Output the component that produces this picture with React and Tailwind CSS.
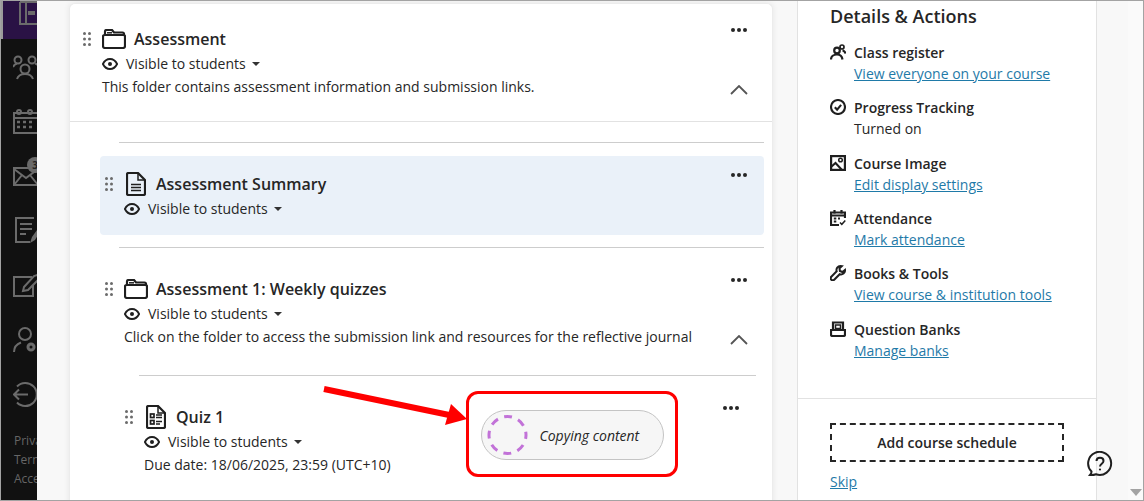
import React from "react";

const ink = "#1f1f1f";

function Grip() {
  return (
    <svg width="8" height="14" viewBox="0 0 8 14" fill="#6b6b6b" className="shrink-0">
      {[1.5, 7, 12.5].map((y) => (
        <g key={y}>
          <circle cx="1.5" cy={y} r="1.5" />
          <circle cx="6.5" cy={y} r="1.5" />
        </g>
      ))}
    </svg>
  );
}

function Folder() {
  return (
    <svg width="24" height="20" viewBox="0 0 24 20" fill="none" stroke={ink} strokeWidth="2.2" className="shrink-0">
      <path d="M3 6V2.500C3 1.700 3.600 1 4.500 1H10l2 2.500h8.500c.8 0 1.500.7 1.500 1.500v1" />
      <path d="M1 7.500C1 6.700 1.700 6 2.500 6h19c.8 0 1.500.7 1.500 1.500V17c0 1.100-.9 2-2 2H3c-1.100 0-2-.9-2-2z" />
      <path d="M5 3.800h5" strokeWidth="1.500" />
    </svg>
  );
}

function Doc({ quiz }) {
  return (
    <svg width="20" height="24" viewBox="0 0 20 24" fill="none" stroke={ink} strokeWidth="2.2" className="shrink-0">
      <path d="M2.500 1H12l7 7v13.500c0 .8-.7 1.500-1.500 1.500h-15C1.700 23 1 22.300 1 21.500v-19C1 1.700 1.700 1 2.500 1z" />
      <path d="M12 1v7h7" strokeWidth="1.500" />
      {quiz ? (
        <>
          <rect x="4.500" y="9" width="3.500" height="3.500" strokeWidth="1.700" />
          <rect x="4.500" y="15.500" width="3.500" height="3.500" strokeWidth="1.700" />
          <path d="M10 10h6M10 12.500h6M10 16.500h6M10 19h4" strokeWidth="1.500" />
        </>
      ) : (
        <path d="M5 12.500h10M5 15.500h10M5 18.500h10" strokeWidth="1.700" />
      )}
    </svg>
  );
}

function Eye() {
  return (
    <svg width="16" height="12" viewBox="0 0 16 12" fill="none" stroke={ink} strokeWidth="1.900" className="shrink-0">
      <path d="M.9 6C2.500 2.800 5 1 8 1s5.500 1.800 7.100 5C13.500 9.200 11 11 8 11S2.500 9.200.9 6z" />
      <circle cx="8" cy="6" r="2" fill={ink} stroke="none" />
    </svg>
  );
}

function Visible() {
  return (
    <div className="flex items-center h-[23px] text-[14px] text-[#262626]">
      <Eye />
      <span className="ml-2">Visible to students</span>
      <span className="ml-[6px] mt-[1px] w-0 h-0 border-x-[4px] border-x-transparent border-t-[4px] border-t-[#333333]" />
    </div>
  );
}

function Dots({ className }) {
  return (
    <div className={`flex gap-[2px] ${className}`}>
      <span className="w-[4px] h-[4px] rounded-full bg-[#262626]" />
      <span className="w-[4px] h-[4px] rounded-full bg-[#262626]" />
      <span className="w-[4px] h-[4px] rounded-full bg-[#262626]" />
    </div>
  );
}

function Chevron() {
  return (
    <svg width="18" height="10" viewBox="0 0 18 10" fill="none" stroke="#555555" strokeWidth="1.800">
      <path d="M1 9l8-8 8 8" />
    </svg>
  );
}

function Sidebar() {
  const c = "#6b6b6b";
  return (
    <aside className="relative w-[36px] shrink-0 bg-[#111111] overflow-hidden flex flex-col">
      <div className="h-[38px] bg-[#2a1245] shrink-0 flex">
        <div className="w-[2px] bg-[#9a9a9a]" />
        <svg width="34" height="38" viewBox="0 0 34 38" fill="none" stroke={c} strokeWidth="2" className="shrink-0">
          <path d="M17 1V23H40M17 1h20M23 1v22" />
          <rect x="25" y="10" width="7" height="4" fill={c} stroke="none" />
        </svg>
      </div>
      <div className="flex flex-col pl-[12px]">
        <svg width="30" height="30" viewBox="0 0 30 30" fill="none" stroke={c} strokeWidth="2" className="mt-[16px] shrink-0">
          <circle cx="5" cy="5" r="3.500" />
          <circle cx="19" cy="5" r="3.500" />
          <circle cx="12" cy="14" r="4.500" />
          <path d="M0 12c1-2 2-3 4-3.500M26 12c-1-2-2-3-4-3.500M4 24c1-3 4-5 8-5s7 2 8 5" />
        </svg>
        <svg width="30" height="30" viewBox="0 0 30 30" fill="none" stroke={c} strokeWidth="2" className="mt-[24px] shrink-0">
          <rect x="1" y="4" width="24" height="20" />
          <path d="M1 9h24" />
          <circle cx="6" cy="3" r="2" />
          <circle cx="17" cy="3" r="2" />
          <path d="M4 13h3M10 13h3M16 13h3M4 18h3M10 18h3M16 18h3" strokeWidth="2.500" />
        </svg>
        <div className="relative mt-[20px] h-[30px]">
          <svg width="30" height="30" viewBox="0 0 30 30" fill="none" stroke={c} strokeWidth="2">
            <rect x="1" y="9" width="24" height="17" />
            <path d="M1 10l12 9 12-9M1 26l8-10M25 26l-8-10" />
          </svg>
          <span className="absolute left-[14px] top-[-2px] w-[16px] h-[16px] rounded-full bg-[#6a6a6a] text-[10px] leading-[16px] text-[#222222] font-bold text-center">3</span>
        </div>
        <svg width="30" height="30" viewBox="0 0 30 30" fill="none" stroke={c} strokeWidth="2" className="mt-[28px] shrink-0">
          <path d="M21 1H3v24h14" />
          <path d="M7 7h12M7 12h12M7 17h6" />
          <path d="M17 26l2-6 5-7 3 2-5 8z" fill={c} stroke="none" />
        </svg>
        <svg width="30" height="30" viewBox="0 0 30 30" fill="none" stroke={c} strokeWidth="2" className="mt-[25px] shrink-0">
          <path d="M19 5H1v19h19V13" />
          <path d="M11 15l10-11 3-1 2 2-1 3-10 10-5 1z" />
        </svg>
        <svg width="30" height="30" viewBox="0 0 30 30" fill="none" stroke={c} strokeWidth="2" className="mt-[25px] shrink-0">
          <circle cx="12" cy="7" r="6" />
          <path d="M1 25c0-5 3-8 7-9.500" />
          <circle cx="18" cy="20" r="3" strokeWidth="3" />
        </svg>
        <svg width="30" height="30" viewBox="0 0 30 30" fill="none" stroke={c} strokeWidth="2" className="mt-[25px] shrink-0">
          <path d="M15 12.500H1M6 7.500l-5 5 5 5" />
          <path d="M4 4.500a11.500 11.500 0 1 1 0 16" />
        </svg>
      </div>
      <div className="mt-[19px] pl-[13px] text-[12px] leading-[19px] text-[#666666] whitespace-nowrap">
        <div>Privacy</div>
        <div>Terms</div>
        <div>Accessibility</div>
      </div>
    </aside>
  );
}

function Title({ children }) {
  return <div className="text-[16px] font-semibold text-[#262626] leading-[22px]">{children}</div>;
}

function Rule({ className }) {
  return <div className={`h-px bg-[#cdcdcd] ${className}`} />;
}

function ContentArea() {
  return (
    <main className="w-[760px] shrink-0 pl-[32px] pt-[2px] overflow-hidden">
      <div className="relative w-[704px] h-[520px] bg-white rounded-t-[6px] border-l border-t border-r border-[#ececec] shadow-[0_0_6px_rgba(0,0,0,0.08)]">
        <section className="relative h-[118px] border-b border-[#e2e2e2] pl-[13px] pt-[24px]">
          <div className="flex items-center">
            <Grip />
            <span className="ml-[11px]"><Folder /></span>
            <span className="ml-[8px]"><Title>Assessment</Title></span>
          </div>
          <div className="pl-[19px] mt-[2px]">
            <Visible />
            <p className="text-[14px] leading-[23px] text-[#262626]">This folder contains assessment information and submission links.</p>
          </div>
          <Dots className="absolute right-[25px] top-[24px]" />
          <span className="absolute right-[24px] top-[81px]"><Chevron /></span>
        </section>

        <div className="pl-[30px] pr-[8px]">
          <Rule className="mt-[20px] ml-[19px]" />
          <section className="relative mt-[13px] h-[79px] rounded-[4px] bg-[#eaf1f9] pl-[5px] pt-[16px]">
            <div className="flex items-center">
              <Grip />
              <span className="ml-[13px]"><Doc /></span>
              <span className="ml-[10px]"><Title>Assessment Summary</Title></span>
            </div>
            <div className="pl-[19px] mt-[1px]"><Visible /></div>
            <Dots className="absolute right-[17px] top-[17px]" />
          </section>
          <Rule className="mt-[12px] ml-[19px]" />
          <section className="relative h-[127px] pl-[5px] pt-[30px]">
            <div className="flex items-center">
              <Grip />
              <span className="ml-[11px]"><Folder /></span>
              <span className="ml-[8px]"><Title>Assessment 1: Weekly quizzes</Title></span>
            </div>
            <div className="pl-[19px] mt-[2px]">
              <Visible />
              <p className="text-[14px] leading-[23px] text-[#262626] whitespace-nowrap">Click on the folder to access the submission link and resources for the reflective journal</p>
            </div>
            <Dots className="absolute right-[17px] top-[30px]" />
            <span className="absolute right-[16px] top-[87px]"><Chevron /></span>
          </section>
          <div className="pl-[9px] pr-[8px]">
            <Rule className="ml-[30px]" />
            <section className="relative pl-[16px] pt-[29px] h-[113px]">
              <div className="flex items-center">
                <Grip />
                <span className="ml-[13px]"><Doc quiz /></span>
                <span className="ml-[10px]"><Title>Quiz 1</Title></span>
              </div>
              <div className="pl-[19px] mt-[1px]">
                <Visible />
                <p className="text-[14px] leading-[23px] text-[#262626]">Due date: 18/06/2025, 23:59 (UTC+10)</p>
              </div>
              <Dots className="absolute right-[17px] top-[30px]" />
            </section>
          </div>
        </div>
      </div>
    </main>
  );
}

const icons = {
  people: (
    <svg width="16" height="16" viewBox="0 0 16 16" fill="none" stroke={ink} strokeWidth="2.2">
      <circle cx="7" cy="6.500" r="2.800" />
      <circle cx="12" cy="3" r="2" strokeWidth="1.700" />
      <path d="M1 15.500c0-3 2.500-5 6-5s5 1.500 5.500 5M12.500 6.500c1.500.2 2.500 1 3 3" />
    </svg>
  ),
  check: (
    <svg width="16" height="16" viewBox="0 0 16 16" fill="none" stroke={ink} strokeWidth="2.100">
      <circle cx="8" cy="8" r="7" />
      <path d="M4.800 8.300l2.300 2.300 4-4.800" />
    </svg>
  ),
  image: (
    <svg width="16" height="16" viewBox="0 0 16 16" fill="none" stroke={ink} strokeWidth="2.400">
      <rect x="1" y="1" width="14" height="14" />
      <circle cx="10.500" cy="5" r="1.800" strokeWidth="1.500" />
      <path d="M1 12l4.500-4L12 15" strokeWidth="2" />
    </svg>
  ),
  calendar: (
    <svg width="16" height="16" viewBox="0 0 16 16" fill="none" stroke={ink} strokeWidth="2.200">
      <path d="M15 8V2.500H1V15h8" />
      <path d="M1 5.500h14M4.500 0v3.500M11.500 0v3.500" />
      <path d="M3.800 8.500h2.500M3.800 11.500h2.500M8 8.500h2" strokeWidth="2" />
      <path d="M10 12.500l1.800 1.800 3.500-3.800" strokeWidth="1.500" />
    </svg>
  ),
  wrench: (
    <svg width="16" height="16" viewBox="0 0 16 16" fill="none" stroke={ink} strokeWidth="2">
      <path d="M10.500 1a4 4 0 0 0-3.800 5.300L1.300 11.800a2 2 0 0 0 2.900 2.900l5.500-5.500A4 4 0 0 0 15 5l-2.600 2-2.500-1-.4-2.600L11.800 1.200z" />
    </svg>
  ),
  bank: (
    <svg width="16" height="16" viewBox="0 0 16 16" fill="none" stroke={ink} strokeWidth="2.200">
      <path d="M3 9V1.500h10V9" />
      <rect x="5.500" y="4" width="5" height="3.500" strokeWidth="1.500" />
      <path d="M1 9h14v4.500c0 .8-.7 1.500-1.500 1.500h-11C1.700 15 1 14.300 1 13.500z" />
    </svg>
  ),
};

const rows = [
  { i: "people", t: "Class register", l: "View everyone on your course", h: 55 },
  { i: "check", t: "Progress Tracking", s: "Turned on", h: 56 },
  { i: "image", t: "Course Image", l: "Edit display settings", h: 55 },
  { i: "calendar", t: "Attendance", l: "Mark attendance", h: 55 },
  { i: "wrench", t: "Books & Tools", l: "View course & institution tools", h: 56 },
  { i: "bank", t: "Question Banks", l: "Manage banks", h: 55 },
];

function RightPanel() {
  return (
    <aside className="w-[300px] shrink-0 bg-white border-x border-[#e2e2e2] flex flex-col">
      <div className="h-[398px] border-b border-[#e2e2e2] pl-[32px] pt-[3px]">
        <h2 className="text-[18px] leading-[25px] font-semibold text-[#262626]">Details &amp; Actions</h2>
        <div className="mt-[13px]">
          {rows.map((r) => (
            <div key={r.t} className="flex" style={{ height: r.h }}>
              <span className="w-[24px] shrink-0 pt-[2px]">{icons[r.i]}</span>
              <div>
                <div className="text-[14px] leading-[21px] font-semibold text-[#262626]">{r.t}</div>
                {r.l ? (
                  <a className="text-[14px] leading-[21px] text-[#1f7aa8] underline block">{r.l}</a>
                ) : (
                  <div className="text-[14px] leading-[21px] text-[#262626]">{r.s}</div>
                )}
              </div>
            </div>
          ))}
        </div>
      </div>
      <div className="pl-[32px] pt-[24px]">
        <button className="w-[234px] h-[39px] border-2 border-dashed border-[#262626] text-[14px] font-semibold text-[#262626] flex items-center justify-center">
          Add course schedule
        </button>
        <a className="block mt-[9px] text-[14px] leading-[21px] text-[#1f7aa8] underline">Skip</a>
      </div>
    </aside>
  );
}

export default function App() {
  return (
    <div className="relative w-[1144px] h-[501px] overflow-hidden bg-[#f8f8f8] border border-[#a3a3a3] font-['Open_Sans',sans-serif]">
      <div className="flex h-full">
        <Sidebar />
        <ContentArea />
        <RightPanel />
        <div className="flex-1 relative">
          <div className="absolute right-0 top-0 bottom-0 w-[15px] bg-[#fafafa]" />
          <div className="absolute right-[1px] bottom-[4px] w-0 h-0 border-x-[6px] border-x-transparent border-t-[7px] border-t-[#a3a3a3]" />
        </div>
      </div>

      <svg className="absolute left-[1086px] top-[450px]" width="26" height="26" viewBox="0 0 26 26" fill="none" stroke={ink} strokeWidth="2">
        <path d="M3 24c1-1 1.600-2.200 1.500-3.500A11.500 11.500 0 1 1 9 23.300C7 24 5 24.300 3 24z" />
        <path d="M9.500 10c0-2 1.500-3.300 3.500-3.300s3.500 1.300 3.500 3.200c0 2.800-3.500 2.800-3.500 5.600" />
        <circle cx="13" cy="18.500" r="1.100" fill={ink} stroke="none" />
      </svg>

      {/* Annotation: arrow, red box and the copying pill over the quiz row */}
      <svg className="absolute left-[320px] top-[382px]" width="150" height="50" viewBox="0 0 150 50">
        <path d="M3 6L133 33" stroke="#ff0000" strokeWidth="6" />
        <path d="M146 36L124 42L130 21z" fill="#ff0000" />
      </svg>
      <div className="absolute left-[465px] top-[390px] w-[212px] h-[86px] rounded-[12px] border-[3px] border-[#ff0000] flex items-center justify-center">
        <div className="w-[183px] h-[50px] rounded-full bg-[#f6f6f6] border border-[#c4c4c4] flex items-center pl-[5px] mt-[1px]">
          <svg width="42" height="42" viewBox="0 0 42 42" className="shrink-0">
            <circle cx="20.500" cy="21" r="18.500" fill="none" stroke="#c272d8" strokeWidth="3" strokeDasharray="8 6.530" strokeDashoffset="4" />
          </svg>
          <span className="ml-[11px] mt-[2px] text-[14px] italic text-[#262626]">Copying content</span>
        </div>
      </div>
    </div>
  );
}
